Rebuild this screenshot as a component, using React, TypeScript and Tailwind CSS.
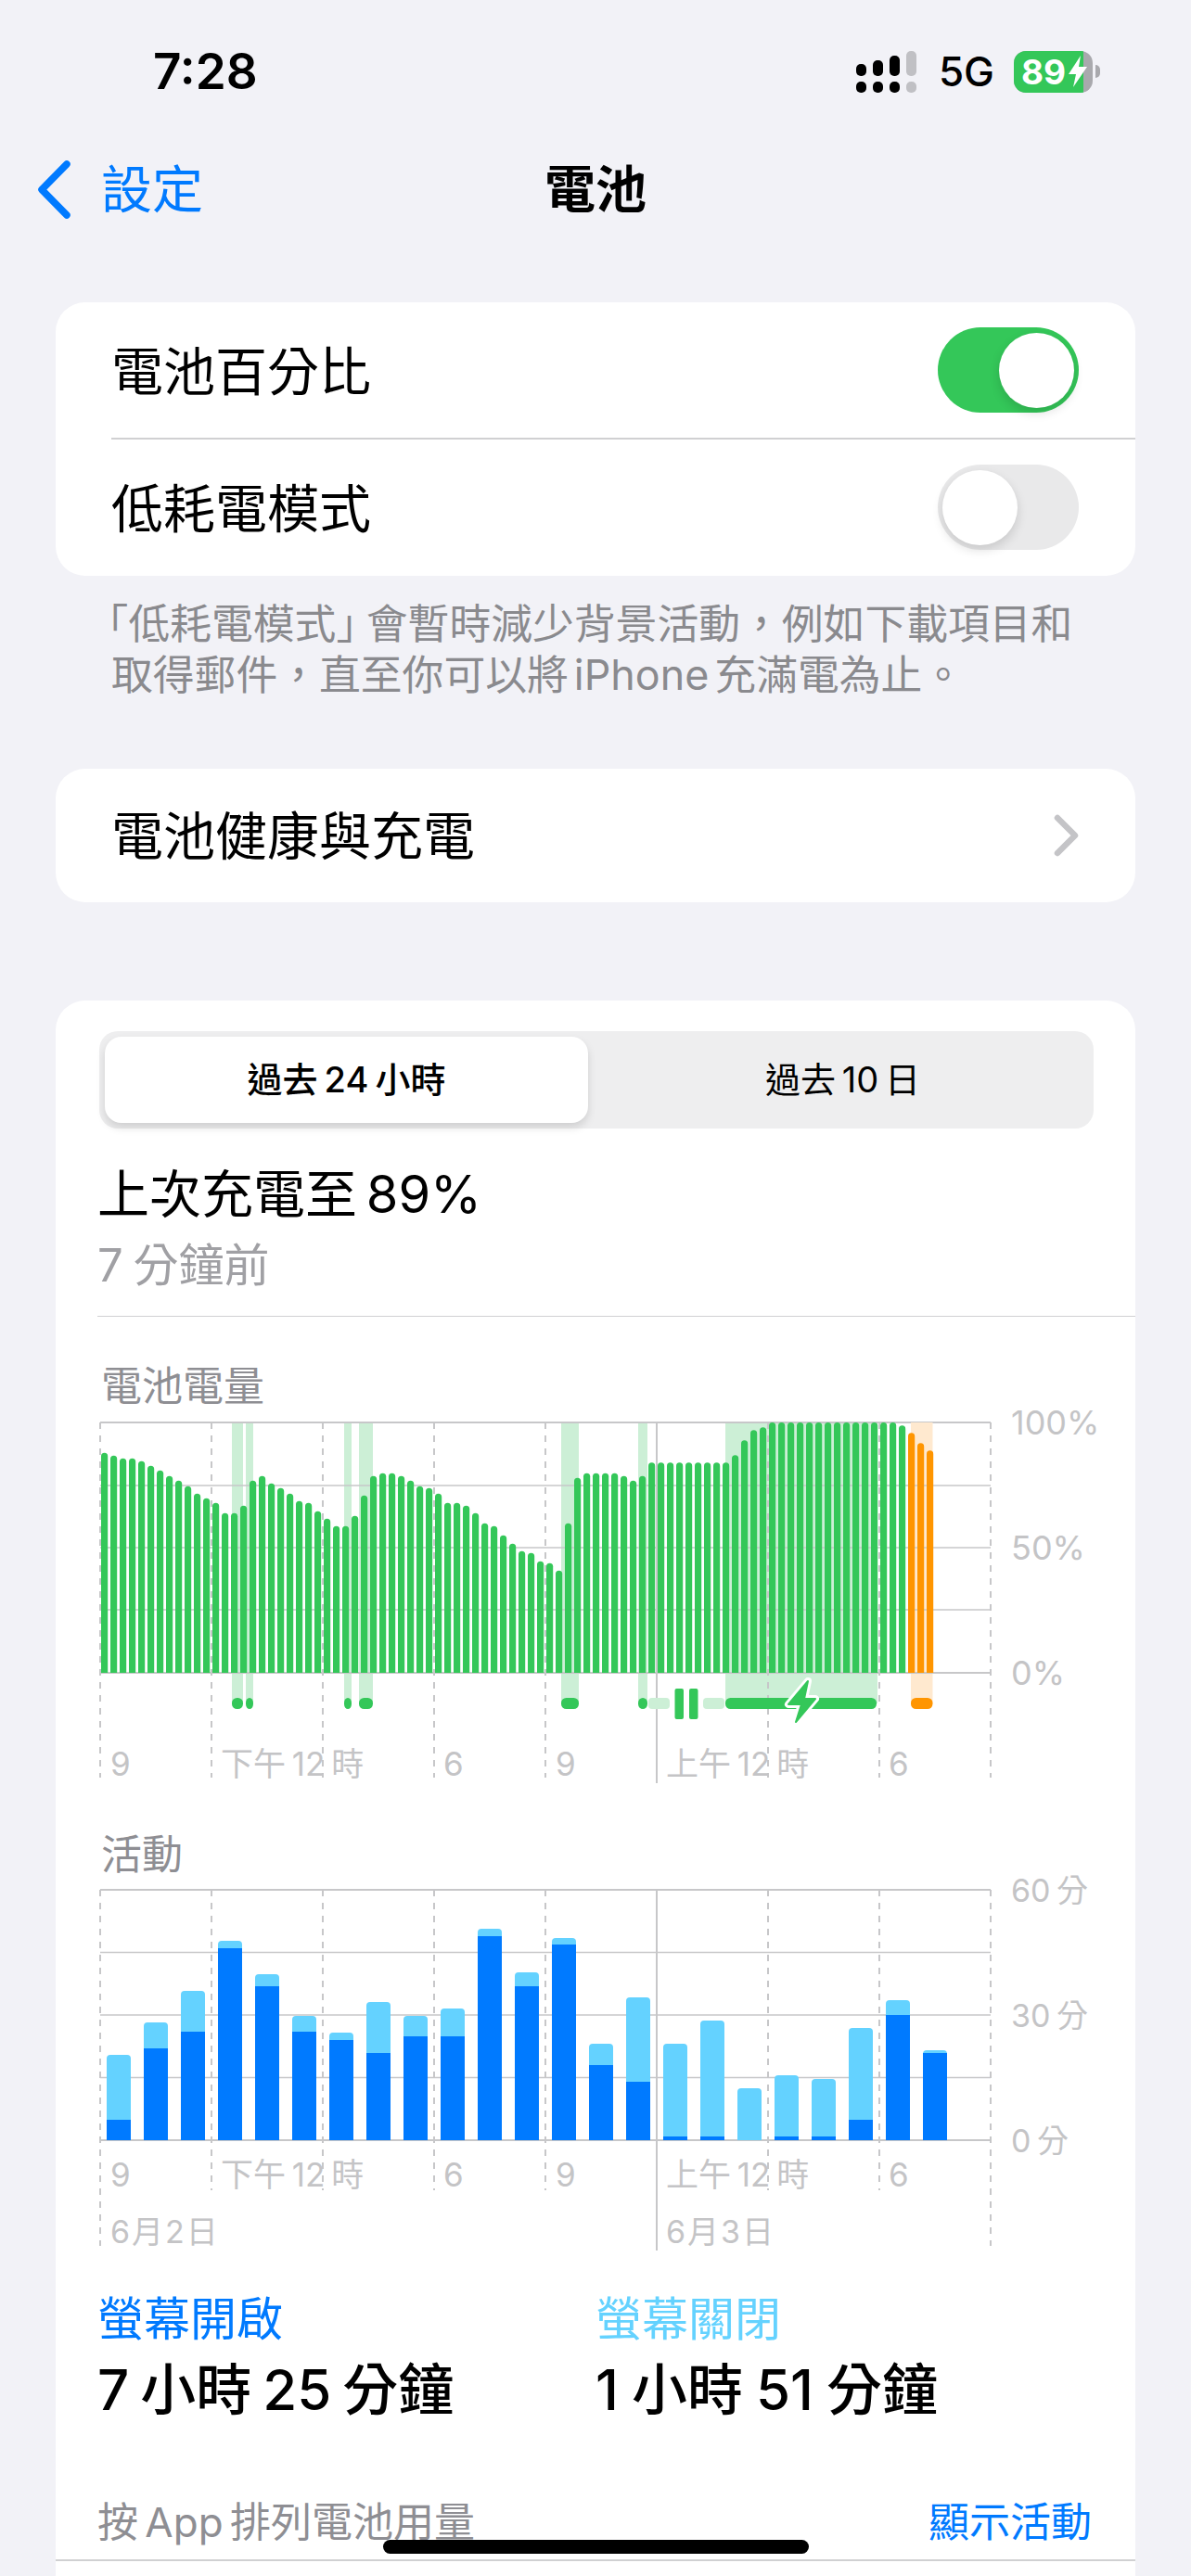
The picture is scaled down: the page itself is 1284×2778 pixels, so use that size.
import React from "react";

const batteryZ = [320,329,338,338,347,362,377,395,410,428,452,467,482,515,515,491,410,395,419,434,452,476,482,509,533,557,557,524,458,395,386,386,395,410,428,434,452,482,482,491,515,548,557,587,614,638,644,671,677,701,548,401,386,386,386,386,395,410,395,352,352,352,352,352,352,352,352,352,328,280,247,238,222,222,222,222,222,222,222,222,222,222,222,222,222,222,232,256,289,313];

const activityZ: [number, number][] = [[678,888],[573,657],[471,603],[309,333],[417,456],[552,603],[606,630],[507,672],[552,618],[528,618],[270,294],[411,456],[300,321],[642,711],[492,765],[642,942],[567,942],[786,954],[744,942],[756,942],[591,888],[501,549],[663,672]];

const dashedShort = [228, 348, 468, 588, 828, 948];
const GRID = "#c7c7c9";

function topRound(x: number, w: number, top: number, bottom: number, r: number) {
  return `M${x} ${bottom}V${top + r}A${r} ${r} 0 0 1 ${x + r} ${top}H${x + w - r}A${r} ${r} 0 0 1 ${x + w} ${top + r}V${bottom}Z`;
}

function BatterySvg() {
  const bands: [number, number][] = [[250,262],[265,273],[371,379],[387,402],[605,624],[688,698]];
  const pills: [number, number][] = bands;
  return (
    <svg width="970" height="392" viewBox="104 1532 970 392" className="block">
      {bands.map(([a, b]) => <rect key={a} x={a} y={1534} width={b - a} height={303} fill="#ccefd6" />)}
      <rect x={782} y={1534} width={164} height={303} fill="#ccefd6" />
      <rect x={982} y={1534} width={23.5} height={303} fill="#ffe9cf" />
      {[1534, 1602, 1669, 1736, 1804].map((y) => <line key={y} x1={108} x2={1068} y1={y} y2={y} stroke={GRID} strokeWidth={y === 1534 || y === 1804 ? 2 : 1.5} />)}
      {[108, 228, 348, 468, 588, 828, 948, 1068].map((x) => <line key={x} x1={x} x2={x} y1={1534} y2={1917} stroke={GRID} strokeWidth={2} strokeDasharray="7 7" />)}
      <line x1={708} x2={708} y1={1534} y2={1923} stroke={GRID} strokeWidth={2} />
      <rect x={982} y={1534} width={23.5} height={1} fill="#ffe9cf" />
      {batteryZ.map((z, i) => {
        const top = 1460 + z / 3;
        return <path key={i} d={topRound(109 + i * 10, 7.2, top, 1804, 3.6)} fill={i >= 87 ? "#ff9500" : "#34c759"} />;
      })}
      {pills.map(([a, b]) => <rect key={a} x={a} y={1831} width={b - a} height={12} rx={5.5} fill="#34c759" />)}
      <rect x={699} y={1831} width={23} height={12} rx={4} fill="#ccefd6" />
      <rect x={758} y={1831} width={23} height={12} rx={4} fill="#ccefd6" />
      <rect x={727.5} y={1821} width={9.5} height={33} rx={2} fill="#34c759" />
      <rect x={743} y={1821} width={9.5} height={33} rx={2} fill="#34c759" />
      <rect x={782} y={1831} width={163} height={12} rx={5.5} fill="#34c759" />
      <rect x={982} y={1831} width={23.5} height={12} rx={5.5} fill="#ff9500" />
      <path d="M871 1813L850 1838H864L858 1857L879 1832H867Z" fill="#34c759" stroke="#fff" strokeWidth={8} strokeLinejoin="round" />
      <path d="M871 1813L850 1838H864L858 1857L879 1832H867Z" fill="#34c759" stroke="#34c759" strokeWidth={2} strokeLinejoin="round" />
    </svg>
  );
}

function ActivitySvg() {
  return (
    <svg width="970" height="392" viewBox="104 2036 970 392" className="block">
      {[2038, 2105.5, 2173, 2240.5, 2308].map((y) => <line key={y} x1={108} x2={1068} y1={y} y2={y} stroke={GRID} strokeWidth={y === 2038 || y === 2308 ? 2 : 1.5} />)}
      {dashedShort.map((x) => <line key={x} x1={x} x2={x} y1={2038} y2={2362} stroke={GRID} strokeWidth={2} strokeDasharray="7 7" />)}
      {[108, 1068].map((x) => <line key={x} x1={x} x2={x} y1={2038} y2={2422} stroke={GRID} strokeWidth={2} strokeDasharray="7 7" />)}
      <line x1={708} x2={708} y1={2038} y2={2427} stroke={GRID} strokeWidth={2} />
      {activityZ.map(([l, d], i) => {
        const x = 115 + i * 40;
        const lt = 1990 + l / 3;
        const dt = 1990 + d / 3;
        return (
          <g key={i}>
            <path d={topRound(x, 26, lt, 2308, 4)} fill="#64d2ff" />
            {d < 954 && <rect x={x} y={dt} width={26} height={2308 - dt} fill="#007aff" />}
          </g>
        );
      })}
    </svg>
  );
}

function YLabels({ items, size }: { items: string[]; size: string }) {
  return (
    <div className={`ml-[16px] mt-[2px] flex h-[270px] flex-col justify-between text-[#c4c4c6] ${size}`}>
      {items.map((t) => (
        <div key={t} className="flex h-0 items-center whitespace-nowrap">{t}</div>
      ))}
    </div>
  );
}

function XLabels({ top }: { top: string }) {
  return (
    <div className={`absolute left-[4px] grid w-[960px] grid-cols-8 text-[35px] leading-[40px] text-[#c4c4c6] ${top}`}>
      <div className="pl-[11px]">9</div>
      <div className="col-span-2 whitespace-nowrap pl-[10px]">下午 12 時</div>
      <div className="pl-[10px]">6</div>
      <div className="pl-[11px]">9</div>
      <div className="col-span-2 whitespace-nowrap pl-[10px]">上午 12 時</div>
      <div className="pl-[10px]">6</div>
    </div>
  );
}

function Toggle({ on }: { on: boolean }) {
  return (
    <div className={`flex h-[92px] w-[152px] items-center rounded-full px-[5px] ${on ? "justify-end bg-[#34c759]" : "justify-start bg-[#e9e9ea]"}`}>
      <div className="h-[81px] w-[81px] rounded-full bg-white shadow-[0_5px_12px_rgba(0,0,0,0.14)]" />
    </div>
  );
}

function Signal() {
  const cols = [
    { h: "h-[13px]", c: "bg-black" },
    { h: "h-[17px]", c: "bg-black" },
    { h: "h-[22px]", c: "bg-black" },
    { h: "h-[27px]", c: "bg-[#c0c0c4]" },
  ];
  return (
    <div className="flex items-end gap-[7px]">
      {cols.map((k, i) => (
        <div key={i} className="flex flex-col items-center gap-[6px]">
          <div className={`w-[11px] rounded-[5px] ${k.h} ${k.c}`} />
          <div className={`h-[12px] w-[11px] rounded-[5px] ${k.c}`} />
        </div>
      ))}
    </div>
  );
}

function Battery() {
  return (
    <div className="flex items-center gap-[3px]">
      <div className="relative flex h-[45px] w-[85px] overflow-hidden rounded-[13px] bg-[#a9a9ad]">
        <div className="h-full w-[75px] bg-[#34c759]" />
        <div className="absolute inset-0 flex items-center pl-[8px] text-[37px] font-bold leading-none text-white">
          <span>89</span>
          <svg width="20" height="34" viewBox="0 0 20 34" className="ml-[3px]">
            <path d="M13 0L0 20H8L5 34L20 12H11Z" fill="#fff" />
          </svg>
        </div>
      </div>
      <div className="h-[14px] w-[5px] rounded-r-full bg-[#a9a9ad]" />
    </div>
  );
}

export default function App() {
  return (
    <div className="relative h-[2778px] w-[1284px] overflow-hidden bg-[#f2f2f7] font-[Inter,'Noto_Sans_CJK_TC',sans-serif] text-black [word-spacing:-3px]">
      {/* status bar */}
      <div className="flex h-[154px] items-center justify-between pl-[165px] pr-[98px]">
        <div className="text-[53px] font-semibold leading-none">7:28</div>
        <div className="flex items-center">
          <Signal />
          <div className="ml-[24px] mr-[21px] text-[44px] font-medium leading-none">5G</div>
          <Battery />
        </div>
      </div>

      {/* nav */}
      <div className="grid h-[100px] grid-cols-3 items-center">
        <div className="flex items-center pl-[41px]">
          <svg width="35" height="63" viewBox="0 0 35 63">
            <path d="M31 4L4 31.5L31 59" fill="none" stroke="#007aff" strokeWidth="7.5" strokeLinecap="round" strokeLinejoin="round" />
          </svg>
          <span className="ml-[33px] text-[55px] leading-none text-[#007aff]">設定</span>
        </div>
        <div className="text-center text-[55px] font-semibold leading-none">電池</div>
      </div>

      {/* toggles */}
      <div className="mx-[60px] mt-[72px] overflow-hidden rounded-[32px] bg-white">
        <div className="flex h-[146px] items-center justify-between pl-[60px] pr-[61px]">
          <span className="pt-[3px] text-[56px] leading-none">電池百分比</span>
          <Toggle on />
        </div>
        <div className="ml-[60px] h-[1.5px] bg-[#d0d0d2]" />
        <div className="flex h-[147px] items-center justify-between pl-[60px] pr-[61px]">
          <span className="pt-[3px] text-[56px] leading-none">低耗電模式</span>
          <Toggle on={false} />
        </div>
      </div>

      <div className="mt-[25px] text-[44.8px] leading-[55px] text-[#8a8a8e]">
        <div className="whitespace-nowrap pl-[116px]">
          <span className="[font-feature-settings:'halt']">「</span>低耗電模式<span className="mr-[10px] [font-feature-settings:'halt']">」</span>會暫時減少背景活動，例如下載項目和
        </div>
        <div className="whitespace-nowrap pl-[120px] [word-spacing:-6.5px]">取得郵件，直至你可以將 iPhone 充滿電為止。</div>
      </div>

      {/* health row */}
      <div className="mx-[60px] mt-[73px] flex h-[144px] items-center justify-between rounded-[32px] bg-white pl-[60px] pr-[60px]">
        <span className="pt-[2px] text-[56px] leading-none">電池健康與充電</span>
        <svg width="28" height="46" viewBox="0 0 28 46">
          <path d="M4 4L23 23L4 42" fill="none" stroke="#c4c4c7" strokeWidth="6.5" strokeLinecap="round" strokeLinejoin="round" />
        </svg>
      </div>

      {/* charts card */}
      <div className="mx-[60px] mt-[106px] h-[1700px] rounded-t-[32px] bg-white pt-[33px]">
        <div className="relative ml-[47px] flex h-[105px] w-[1072px] rounded-[20px] bg-[#eeeeef] p-[6px]">
          <div className="flex h-[93px] w-[521px] items-center justify-center rounded-[18px] bg-white text-[38px] font-medium shadow-[0_5px_10px_rgba(0,0,0,0.13)]">過去 24 小時</div>
          <div className="flex h-[93px] flex-1 items-center justify-center pl-[10px] text-[38px] [word-spacing:-4px]">過去 10 日</div>
        </div>

        <div className="ml-[45px] mt-[36px] h-[70px] text-[56px] leading-[70px] [word-spacing:-6px]">上次充電至 89%</div>
        <div className="ml-[45px] mt-[12px] h-[60px] text-[49px] leading-[60px] text-[#a0a0a4]">7 分鐘前</div>
        <div className="ml-[45px] mt-[24px] h-[1.5px] bg-[#d0d0d2]" />

        <div className="ml-[49px] mt-[45px] h-[60px] text-[44px] leading-[60px] text-[#8e8e93]">電池電量</div>
        <div className="ml-[44px] mt-[7px] flex">
          <div className="relative">
            <BatterySvg />
            <XLabels top="top-[350px]" />
          </div>
          <YLabels size="text-[36px]" items={["100%", "50%", "0%"]} />
        </div>

        <div className="ml-[49px] mt-[46px] h-[60px] text-[44px] leading-[60px] text-[#8e8e93]">活動</div>
        <div className="ml-[44px] mt-[6px] flex">
          <div className="relative">
            <ActivitySvg />
            <XLabels top="top-[289px]" />
            <div className="absolute left-[4px] top-[351px] grid w-[960px] grid-cols-8 text-[34px] leading-[40px] tracking-[2px] text-[#c4c4c6]">
              <div className="col-span-5 pl-[11px]">6月2日</div>
              <div className="col-span-3 pl-[10px]">6月3日</div>
            </div>
          </div>
          <YLabels size="text-[34px]" items={["60 分", "30 分", "0 分"]} />
        </div>

        <div className="ml-[45px] mt-[43px] grid grid-cols-[537px_1fr]">
          <div className="h-[60px] text-[50px] leading-[60px] text-[#007aff]">螢幕開啟</div>
          <div className="h-[60px] text-[50px] leading-[60px] text-[#64d2ff]">螢幕關閉</div>
          <div className="mt-[8px] h-[76px] text-[60px] font-medium leading-[76px] [word-spacing:-4px]">7 小時 25 分鐘</div>
          <div className="mt-[8px] h-[76px] text-[60px] font-medium leading-[76px] [word-spacing:-2px]">1 小時 51 分鐘</div>
        </div>

        <div className="ml-[45px] mr-[47px] mt-[75px] flex h-[60px] items-center justify-between text-[44px] leading-[60px] [word-spacing:-5px]">
          <span className="text-[#8e8e93]">按 App 排列電池用量</span>
          <span className="text-[#007aff]">顯示活動</span>
        </div>
        <div className="mt-[10px] h-[1.5px] bg-[#d0d0d2]" />
      </div>

      <div className="absolute bottom-[24px] left-[413px] h-[15px] w-[459px] rounded-full bg-black" />
    </div>
  );
}
